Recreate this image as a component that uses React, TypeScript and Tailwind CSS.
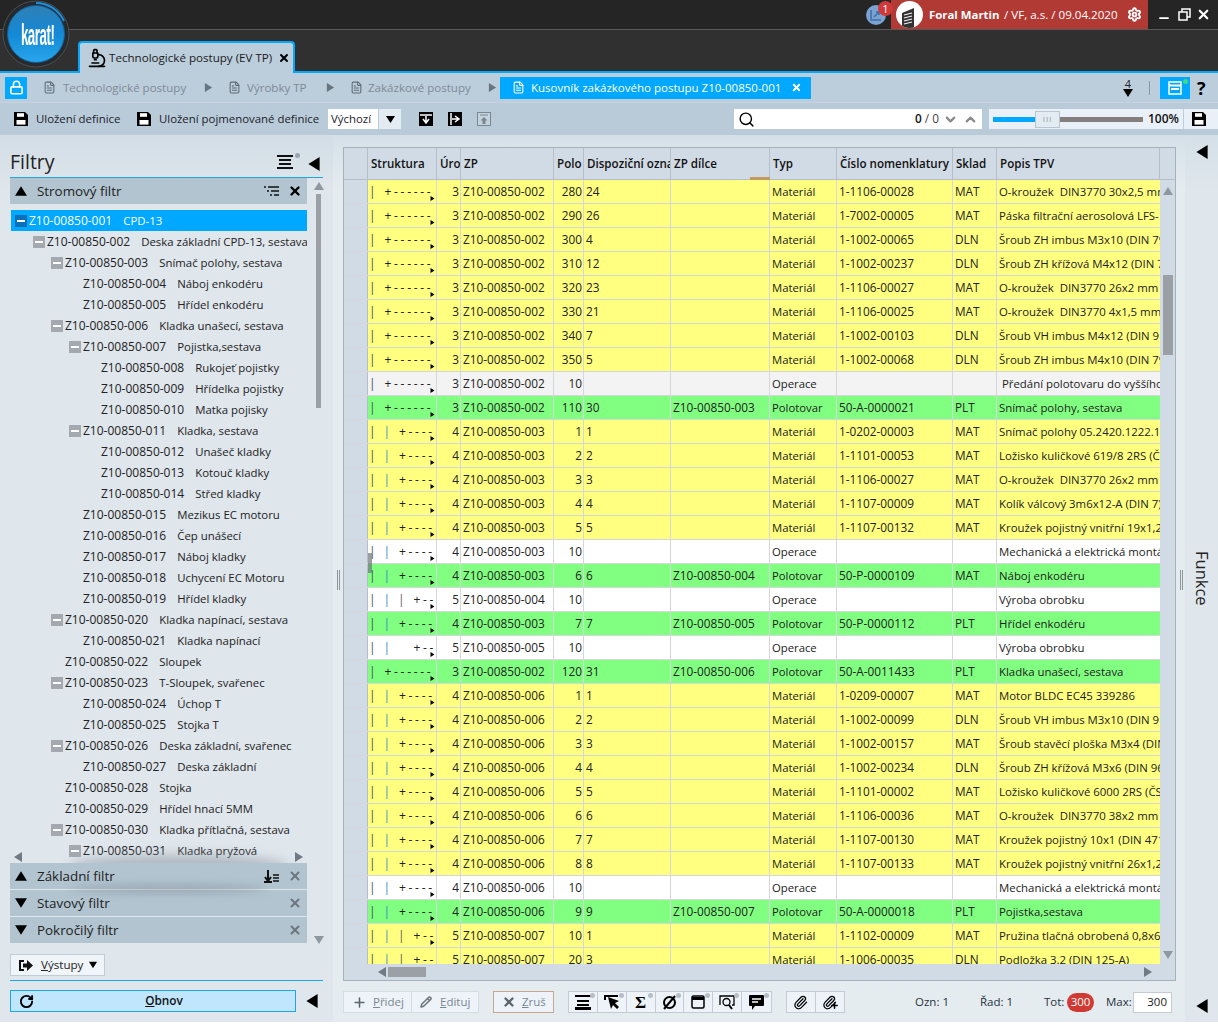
import React from 'react';
import {
  Microscope, FileText, Lock, Settings, Search, Plus, Pencil, X, RotateCw,
  Paperclip, ChevronDown, ChevronUp, Minus,
} from 'lucide-react';

type Kind = 'm' | 'o' | 'p' | 'f';
// level, zp, polo, disp, dilce, typ kind, cislo, sklad, popis
type Row = [number, string, string, string, string, Kind, string, string, string, boolean?];

const rows: Row[] = [
  [3, '002', '280', '24', '', 'm', '1-1106-00028', 'MAT', 'O-kroužek  DIN3770 30x2,5 mm'],
  [3, '002', '290', '26', '', 'm', '1-7002-00005', 'MAT', 'Páska filtrační aerosolová LFS-1'],
  [3, '002', '300', '4', '', 'm', '1-1002-00065', 'DLN', 'Šroub ZH imbus M3x10 (DIN 7984)'],
  [3, '002', '310', '12', '', 'm', '1-1002-00237', 'DLN', 'Šroub ZH křížová M4x12 (DIN 7985)'],
  [3, '002', '320', '23', '', 'm', '1-1106-00027', 'MAT', 'O-kroužek  DIN3770 26x2 mm'],
  [3, '002', '330', '21', '', 'm', '1-1106-00025', 'MAT', 'O-kroužek  DIN3770 4x1,5 mm'],
  [3, '002', '340', '7', '', 'm', '1-1002-00103', 'DLN', 'Šroub VH imbus M4x12 (DIN 912)'],
  [3, '002', '350', '5', '', 'm', '1-1002-00068', 'DLN', 'Šroub ZH imbus M4x10 (DIN 7984)'],
  [3, '002', '10', '', '', 'f', '', '', ' Předání polotovaru do vyššího celku'],
  [3, '002', '110', '30', 'Z10-00850-003', 'p', '50-A-0000021', 'PLT', 'Snímač polohy, sestava'],
  [4, '003', '1', '1', '', 'm', '1-0202-00003', 'MAT', 'Snímač polohy 05.2420.1222.1024'],
  [4, '003', '2', '2', '', 'm', '1-1101-00053', 'MAT', 'Ložisko kuličkové 619/8 2RS (ČSN)'],
  [4, '003', '3', '3', '', 'm', '1-1106-00027', 'MAT', 'O-kroužek  DIN3770 26x2 mm'],
  [4, '003', '4', '4', '', 'm', '1-1107-00009', 'MAT', 'Kolík válcový 3m6x12-A (DIN 7)'],
  [4, '003', '5', '5', '', 'm', '1-1107-00132', 'MAT', 'Kroužek pojistný vnitřní 19x1,2'],
  [4, '003', '10', '', '', 'o', '', '', 'Mechanická a elektrická montáž'],
  [4, '003', '6', '6', 'Z10-00850-004', 'p', '50-P-0000109', 'MAT', 'Náboj enkodéru'],
  [5, '004', '10', '', '', 'o', '', '', 'Výroba obrobku', true],
  [4, '003', '7', '7', 'Z10-00850-005', 'p', '50-P-0000112', 'PLT', 'Hřídel enkodéru'],
  [5, '005', '10', '', '', 'o', '', '', 'Výroba obrobku'],
  [3, '002', '120', '31', 'Z10-00850-006', 'p', '50-A-0011433', 'PLT', 'Kladka unašecí, sestava'],
  [4, '006', '1', '1', '', 'm', '1-0209-00007', 'MAT', 'Motor BLDC EC45 339286'],
  [4, '006', '2', '2', '', 'm', '1-1002-00099', 'DLN', 'Šroub VH imbus M3x10 (DIN 912)'],
  [4, '006', '3', '3', '', 'm', '1-1002-00157', 'MAT', 'Šroub stavěcí ploška M3x4 (DIN)'],
  [4, '006', '4', '4', '', 'm', '1-1002-00234', 'DLN', 'Šroub ZH křížová M3x6 (DIN 965)'],
  [4, '006', '5', '5', '', 'm', '1-1101-00002', 'MAT', 'Ložisko kuličkové 6000 2RS (ČSN)'],
  [4, '006', '6', '6', '', 'm', '1-1106-00036', 'MAT', 'O-kroužek  DIN3770 38x2 mm'],
  [4, '006', '7', '7', '', 'm', '1-1107-00130', 'MAT', 'Kroužek pojistný 10x1 (DIN 471)'],
  [4, '006', '8', '8', '', 'm', '1-1107-00133', 'MAT', 'Kroužek pojistný vnitřní 26x1,2'],
  [4, '006', '10', '', '', 'o', '', '', 'Mechanická a elektrická montáž'],
  [4, '006', '9', '9', 'Z10-00850-007', 'p', '50-A-0000018', 'PLT', 'Pojistka,sestava'],
  [5, '007', '10', '1', '', 'm', '1-1102-00009', 'MAT', 'Pružina tlačná obrobená 0,8x6x20', true],
  [5, '007', '20', '3', '', 'm', '1-1006-00035', 'DLN', 'Podložka 3.2 (DIN 125-A)', true],
];

const typ: Record<Kind, string> = { m: 'Materiál', o: 'Operace', f: 'Operace', p: 'Polotovar' };
const rowBg: Record<Kind, string> = {
  m: 'bg-[#ffff80]',
  o: 'bg-white',
  f: 'bg-[#f3f3f3]',
  p: 'bg-[#80ff80]',
};

// indent level, has box, code suffix, name
const tree: [number, boolean, string, string][] = [
  [0, true, '001', 'CPD-13'],
  [1, true, '002', 'Deska základní CPD-13, sestava'],
  [2, true, '003', 'Snímač polohy, sestava'],
  [3, false, '004', 'Náboj enkodéru'],
  [3, false, '005', 'Hřídel enkodéru'],
  [2, true, '006', 'Kladka unašecí, sestava'],
  [3, true, '007', 'Pojistka,sestava'],
  [4, false, '008', 'Rukojeť pojistky'],
  [4, false, '009', 'Hřídelka pojistky'],
  [4, false, '010', 'Matka pojisky'],
  [3, true, '011', 'Kladka, sestava'],
  [4, false, '012', 'Unašeč kladky'],
  [4, false, '013', 'Kotouč kladky'],
  [4, false, '014', 'Střed kladky'],
  [3, false, '015', 'Mezikus EC motoru'],
  [3, false, '016', 'Čep unášecí'],
  [3, false, '017', 'Náboj kladky'],
  [3, false, '018', 'Uchycení EC Motoru'],
  [3, false, '019', 'Hřídel kladky'],
  [2, true, '020', 'Kladka napínací, sestava'],
  [3, false, '021', 'Kladka napínací'],
  [2, false, '022', 'Sloupek'],
  [2, true, '023', 'T-Sloupek, svařenec'],
  [3, false, '024', 'Úchop T'],
  [3, false, '025', 'Stojka T'],
  [2, true, '026', 'Deska základní, svařenec'],
  [3, false, '027', 'Deska základní'],
  [2, false, '028', 'Stojka'],
  [2, false, '029', 'Hřídel hnací 5MM'],
  [2, true, '030', 'Kladka přítlačná, sestava'],
  [3, true, '031', 'Kladka pryžová'],
];

const Tri = ({ dir, size = 10, className = '' }: { dir: 'u' | 'd' | 'l' | 'r'; size?: number; className?: string }) => {
  const pts = { u: '5,1 10,9 0,9', d: '0,1 10,1 5,9', l: '9,0 9,10 1,5', r: '1,0 1,10 9,5' }[dir];
  return (
    <svg width={size} height={size} viewBox="0 0 10 10" className={`shrink-0 ${className}`} fill="currentColor">
      <polygon points={pts} />
    </svg>
  );
};

const Floppy = ({ className = '' }: { className?: string }) => (
  <svg width="14" height="14" viewBox="0 0 14 14" className={`shrink-0 ${className}`}>
    <path d="M0 0h11l3 3v11H0z" fill="#000" />
    <rect x="3" y="1.2" width="7" height="3.6" fill="#fff" />
    <rect x="2.5" y="8" width="9" height="4.6" fill="#fff" />
  </svg>
);

const Dot = () => <span className="absolute top-[1px] right-[2px] w-[5px] h-[5px] rounded-full bg-[#b5bec6]" />;

const IconBtn = ({ children, last }: { children: React.ReactNode; last?: boolean }) => (
  <div className={`relative w-[29px] h-full flex items-center justify-center ${last ? '' : 'border-r border-[#c3ccd4]'}`}>
    {children}
    <Dot />
  </div>
);

const FilterBar = ({ title, open, extra }: { title: string; open: boolean; extra?: React.ReactNode }) => (
  <div className="h-[26px] bg-[#b1c4d0] flex items-center pl-[5px] pr-[5px] shrink-0">
    <Tri dir={open ? 'u' : 'd'} size={12} className="text-black mr-[10px]" />
    <span className="text-[13.4px] mt-[2px] text-[#222] flex-1">{title}</span>
    {extra}
    <X size={14} strokeWidth={3.5} className="text-[#6d7780] ml-[9px]" />
  </div>
);

const Structure = ({ level, third }: { level: number; third?: boolean }) => (
  <div className="relative flex items-center h-full pl-[1px] overflow-hidden text-[12px]">
    <span className="w-[14.5px] shrink-0 text-[#40505c]">|</span>
    {level >= 4 && <span className="w-[14.5px] shrink-0 text-[#3a86c8]">|</span>}
    {level >= 5 && <span className="w-[14.5px] shrink-0 text-[#5d5d50]">{third ? '|' : ''}</span>}
    <span className="tracking-[2.7px] whitespace-pre text-[#222] ml-[1px]">
      {level === 3 ? '+------' : level === 4 ? '+----' : '+--'}
    </span>
    <Tri dir="r" size={5} className="absolute right-[1px] bottom-[2px] text-black" />
  </div>
);

const Cell = ({ children, right }: { children?: React.ReactNode; right?: boolean }) => (
  <div className={`border-r border-[#d4d8dc] h-full flex items-center overflow-hidden whitespace-pre ${right ? 'justify-end pr-[1px]' : 'pl-[2px]'}`}>
    {children}
  </div>
);

const Head = ({ children }: { children?: React.ReactNode }) => (
  <div className="border-r border-[#b4bfca] h-full flex items-center overflow-hidden whitespace-pre pl-[3px] font-semibold text-[11.6px] text-[#111]">
    {children}
  </div>
);

const App: React.FC = () => {
  return (
    <div className="relative w-[1218px] h-[1027px] overflow-hidden bg-white flex flex-col font-['Open_Sans','Noto_Sans',sans-serif] text-[11.8px] text-[#222] leading-none">
      {/* logo */}
      <div className="absolute left-[2px] top-0 w-[70px] h-[70px] z-20">
        <svg width="70" height="70" viewBox="0 0 70 70" className="absolute inset-0">
          <defs>
            <linearGradient id="lg" x1="0" y1="0" x2="0" y2="1">
              <stop offset="0" stopColor="#2f7fb5" />
              <stop offset="0.5" stopColor="#1489d6" />
              <stop offset="1" stopColor="#28a6ec" />
            </linearGradient>
          </defs>
          <circle cx="34" cy="34" r="33" fill="#262a2d" stroke="#4a4f52" strokeWidth="1" />
          <path d="M34 3a31 31 0 0 1 28 18" fill="none" stroke="#1d8fe0" strokeWidth="2" />
          <circle cx="34" cy="34" r="28.5" fill="url(#lg)" stroke="#0f5f96" strokeWidth="1" />
        </svg>
        <div className="absolute left-0 right-0 top-[23px] text-center text-white font-bold text-[29px] leading-[24px] scale-x-[0.46] font-['Liberation_Sans',sans-serif] tracking-[-1px]">
          karat!
        </div>
      </div>

      {/* title bar */}
      <div className="h-[30px] shrink-0 bg-[#252525] border-b border-[#5a5a5a] flex justify-end whitespace-pre">
        <div className="relative w-[24px] mr-[4px] flex items-center justify-center">
          <div className="w-[20px] h-[20px] rounded-full bg-[#7ba3d0] mt-[1px] flex items-center justify-center">
            <svg width="12" height="12" viewBox="0 0 12 12" fill="none" stroke="#3f6ea8" strokeWidth="1.5">
              <path d="M1 1v10h10M4 8l5-5M6 3h3v3" />
            </svg>
          </div>
          <div className="absolute top-[1px] right-[-5px] w-[15px] h-[15px] rounded-full bg-[#d0383a] text-white text-[11px] flex items-center justify-center">1</div>
        </div>
        <div className="w-[257px] ml-[-1px] bg-[#b23a34] flex items-center text-white">
          <div className="ml-[5px] w-[27px] h-[27px] shrink-0 rounded-full bg-white flex items-end justify-center overflow-hidden">
            <svg width="18" height="22" viewBox="0 0 18 22">
              <path d="M1 7l12-5v20H1z" fill="#333" />
              <path d="M3 9l8-2M3 12l8-2M3 15l8-2M3 18l8-2" stroke="#fff" strokeWidth="1" />
            </svg>
          </div>
          <span className="ml-[6px] w-[70px] font-bold text-[11.4px]">Foral Martin</span>
          <span className="ml-[5px] w-[114px] text-[11.6px]">/ VF, a.s. / 09.04.2020</span>
          <Settings size={15} strokeWidth={3} className="ml-[9px] shrink-0" />
        </div>
        <div className="w-[70px] flex items-center text-white pl-[9px]">
          <Minus size={14} strokeWidth={3} className="mt-[6px] shrink-0" />
          <svg width="13" height="13" viewBox="0 0 13 13" className="ml-[7px] shrink-0" fill="none" stroke="#fff" strokeWidth="1.5">
            <rect x="1" y="4" width="8" height="8" />
            <path d="M4 4V1h8v8H9" />
          </svg>
          <X size={15} strokeWidth={3.5} className="ml-[5px] shrink-0" />
        </div>
      </div>

      {/* tab strip */}
      <div className="h-[43px] shrink-0 bg-[#2f302f] border-b-2 border-[#00a8ff] flex items-end pl-[78px]">
        <div className="w-[217px] h-[32px] mb-[-2px] bg-[#bccddb] border-t-2 border-x-2 border-[#00a8ff] rounded-t-[4px] flex items-center pl-[7px] text-[11.6px] text-[#1b1b1b] whitespace-pre">
          <Microscope size={20} strokeWidth={2} className="text-black mr-[2px] shrink-0" />
          Technologické postupy (EV TP)
          <X size={12} strokeWidth={4} className="ml-[6px] text-black shrink-0" />
        </div>
      </div>

      {/* breadcrumb */}
      <div className="h-[30px] shrink-0 bg-[#bccddb] border-b border-[#c7d4df] flex items-center pl-[5px] text-[11.55px] text-[#7d8b97] whitespace-pre">
        <div className="w-[22px] h-[22px] shrink-0 bg-[#00a8ff] flex items-center justify-center">
          <Lock size={15} strokeWidth={2.5} className="text-white" />
        </div>
        <FileText size={13} className="ml-[16px] text-[#5f6d79] shrink-0" />
        <span className="ml-[7px] w-[123px]">Technologické postupy</span>
        <Tri dir="r" size={9} className="ml-[18px] text-[#68757f]" />
        <FileText size={13} className="ml-[15px] text-[#5f6d79] shrink-0" />
        <span className="ml-[6px] w-[60px]">Výrobky TP</span>
        <Tri dir="r" size={9} className="ml-[19px] text-[#68757f]" />
        <FileText size={13} className="ml-[15px] text-[#5f6d79] shrink-0" />
        <span className="ml-[5px] w-[103px]">Zakázkové postupy</span>
        <Tri dir="r" size={9} className="ml-[17px] text-[#68757f]" />
        <div className="ml-[3px] w-[311px] shrink-0 h-[22px] bg-[#00a8ff] text-white flex items-center pl-[12px] text-[11.5px]">
          <FileText size={13} className="mr-[6px] shrink-0" />
          <span className="w-[250px]">Kusovník zakázkového postupu Z10-00850-001</span>
          <X size={11} strokeWidth={4} className="ml-[10px] shrink-0" />
        </div>
        <div className="ml-[310px] w-[14px] shrink-0 flex flex-col items-center text-[#222]">
          <span className="text-[11px] underline">4</span>
          <Tri dir="d" size={10} className="text-black mt-[-1px]" />
        </div>
        <div className="ml-[14px] w-px h-[14px] shrink-0 bg-[#8a97a2]" />
        <div className="relative ml-[10px] w-[30px] h-[22px] shrink-0 bg-[#00a8ff] flex items-center justify-center">
          <svg width="14" height="14" viewBox="0 0 14 14" fill="none" stroke="#fff" strokeWidth="1.5">
            <rect x="1" y="1" width="12" height="12" />
            <path d="M1 4.5h12M3 8h8" strokeWidth="2" />
          </svg>
          <span className="absolute top-[2px] right-[2px] w-[5px] h-[5px] rounded-full bg-[#3ddc84]" />
        </div>
        <span className="ml-[7px] text-[18px] font-bold text-black">?</span>
      </div>

      {/* toolbar */}
      <div className="h-[32px] shrink-0 bg-[#b9cbd9] flex items-center pl-[14px] text-[11.4px] text-[#1b1b2b] whitespace-pre">
        <Floppy />
        <span className="ml-[8px] w-[87px]">Uložení definice</span>
        <Floppy className="ml-[14px]" />
        <span className="ml-[8px] w-[160px]">Uložení pojmenované definice</span>
        <div className="ml-[9px] w-[50px] h-[20px] bg-white flex items-center pl-[3px]">Výchozí</div>
        <div className="ml-px w-[22px] h-[20px] bg-[#e4ecf3] flex items-center justify-center">
          <Tri dir="d" size={9} className="text-black" />
        </div>
        <svg width="14" height="14" viewBox="0 0 14 14" className="ml-[18px] shrink-0">
          <rect width="14" height="14" fill="#000" />
          <path d="M1 3h12M7 4v7M4 7l3 4 3-4" stroke="#fff" strokeWidth="1.5" fill="none" />
        </svg>
        <svg width="14" height="14" viewBox="0 0 14 14" className="ml-[15px] shrink-0">
          <rect width="14" height="14" fill="#000" />
          <path d="M3 1v12M4 7h7M7 4l4 3-4 3" stroke="#fff" strokeWidth="1.5" fill="none" />
        </svg>
        <svg width="14" height="14" viewBox="0 0 14 14" className="ml-[15px] shrink-0">
          <rect x="0.5" y="0.5" width="13" height="13" fill="#c5d3de" stroke="#7a8791" />
          <path d="M3 3h8" stroke="#7a8791" />
          <path d="M7 5l3.5 3.5H8.5V12h-3V8.500H3.500z" fill="#7a8791" />
        </svg>
        <div className="ml-[243px] w-[248px] h-[20px] shrink-0 bg-white flex items-center pl-[4px] pr-[4px] text-[#111] text-[11.8px]">
          <Search size={17} strokeWidth={2} className="text-black shrink-0" />
          <span className="ml-auto font-semibold">0</span>
          <span className="ml-[3px] text-[#444]">/ 0</span>
          <ChevronDown size={15} strokeWidth={3.5} className="ml-[4px] text-[#8a8a8a] shrink-0" />
          <ChevronUp size={15} strokeWidth={3.5} className="ml-[5px] text-[#8a8a8a] shrink-0" />
        </div>
        <div className="ml-[7px] w-[229px] h-[20px] shrink-0 bg-[#e9f0f7] flex items-center pl-[4px]">
          <div className="w-[42px] h-[5px] bg-[#00a8ff]" />
          <div className="w-[25px] h-[17px] bg-[#e4ecf3] border border-[#b8c4ce] flex items-center justify-center text-[8px] text-[#8a96a0] tracking-[1px]">III</div>
          <div className="w-[83px] h-[5px] bg-[#847e7e]" />
          <span className="ml-[5px] w-[35px] font-semibold text-[#111] text-[12px]">100%</span>
          <div className="w-px h-full bg-[#bccddb]" />
          <Floppy className="ml-[8px]" />
        </div>
      </div>

      {/* main */}
      <div className="h-[887px] shrink-0 flex">
        {/* filter panel */}
        <div className="w-[333px] shrink-0 bg-[#dfe6ec] bg-linear-to-b from-[#d2dde5] to-[#dfe6ec] to-[6%] flex flex-col pl-[10px]">
          <div className="w-[313px] h-[43px] shrink-0 border-b border-[#1ea5ea] flex items-end pb-[2px]">
            <span className="text-[19.5px] leading-[26px] text-[#222] flex-1">Filtry</span>
            <div className="relative w-[24px] h-[18px] mb-[4px] mr-[6px]">
              <svg width="16" height="14" viewBox="0 0 16 14" className="absolute left-0 top-[2px]">
                <path d="M0 1h16M2 5h12M2 9h12M0 13h16" stroke="#111" strokeWidth="2" />
              </svg>
              <span className="absolute right-[1px] top-0 w-[5px] h-[5px] rounded-full bg-[#9aa4ad]" />
            </div>
            <Tri dir="l" size={14} className="text-black mb-[4px] mr-[2px]" />
          </div>
          <div className="h-[765px] shrink-0 flex">
            <div className="w-[297px] shrink-0 flex flex-col">
              <div className="h-[26px] bg-[#b1c4d0] flex items-center pl-[5px] pr-[5px] shrink-0">
                <Tri dir="u" size={12} className="text-black mr-[10px]" />
                <span className="text-[13.4px] mt-[2px] text-[#222] flex-1">Stromový filtr</span>
                <svg width="15" height="10" viewBox="0 0 15 10">
                  <path d="M0 1h2M4 1h11M3 5h2M7 5h8M6 9h2M10 9h5" stroke="#111" strokeWidth="1.6" />
                </svg>
                <X size={14} strokeWidth={4} className="text-black ml-[9px]" />
              </div>
              <div className="relative h-[659px] shrink-0 pt-[6px] overflow-hidden">
                {tree.map(([lvl, box, code, name], i) => (
                  <div
                    key={code}
                    className={`h-[21px] flex items-center whitespace-pre text-[12px] ${i === 0 ? 'ml-px bg-[#00a8ff] text-white' : 'text-[#222]'}`}
                    style={{ paddingLeft: (i === 0 ? 4 : 5) + lvl * 18 }}
                  >
                    <span className={`w-[12px] h-[12px] mr-[2px] flex items-center justify-center shrink-0 ${box ? (i === 0 ? 'bg-[#0b70b8]' : 'bg-[#a3a9ae]') : ''}`}>
                      {box && <span className="w-[8px] h-[2px] bg-white" />}
                    </span>
                    <span>{`Z10-00850-${code}`}</span>
                    <span className="ml-[11px] text-[11.4px]">{name}</span>
                  </div>
                ))}
                <div className="absolute left-[60px] right-[20px] bottom-[-14px] h-[22px] rounded-[50%] bg-[#8f98a3] blur-[6px] opacity-60" />
                <Tri dir="l" size={10} className="absolute left-[3px] bottom-[1px] text-[#6f7a84]" />
                <Tri dir="r" size={10} className="absolute right-[3px] bottom-[1px] text-[#6f7a84]" />
              </div>
              <div className="relative">
                <div className="absolute left-[60px] right-[40px] top-[22px] h-[8px] rounded-[50%] bg-[#7f8791] blur-[4px] opacity-50" />
                <FilterBar
                  title="Základní filtr"
                  open
                  extra={
                    <svg width="15" height="13" viewBox="0 0 15 13">
                      <path d="M4 0v10M1 7l3 4 3-4M0 12h8" stroke="#111" strokeWidth="2" fill="none" />
                      <path d="M9 5h6M9 8h6M9 11h6" stroke="#111" strokeWidth="1.6" />
                    </svg>
                  }
                />
              </div>
              <div className="h-px shrink-0" />
              <FilterBar title="Stavový filtr" open={false} />
              <div className="h-px shrink-0" />
              <FilterBar title="Pokročilý filtr" open={false} />
            </div>
            <div className="w-[16px] ml-px flex flex-col items-center pl-[5px]">
              <Tri dir="u" size={10} className="text-[#8f989f] mt-[3px]" />
              <div className="w-[5px] h-[214px] mt-[3px] bg-[#9aa0a6]" />
              <Tri dir="d" size={10} className="text-[#8f989f] mt-auto mb-[-2px]" />
            </div>
          </div>
          <div className="w-[313px] h-[38px] shrink-0 border-b border-[#1ea5ea] pt-[11px]">
            <div className="w-[95px] h-[22px] bg-[#f0f5fa] border border-[#c3ccd4] flex items-center pl-[8px] text-[11.6px] text-[#222]">
              <svg width="14" height="11" viewBox="0 0 14 11" fill="#111" className="mr-[8px] shrink-0">
                <path d="M0 0h5v2H2v7h3v2H0z" />
                <path d="M4 3.500h4V0l6 5.500-6 5.500V7.500H4z" />
              </svg>
              <span><u>V</u>ýstupy</span>
              <Tri dir="d" size={8} className="ml-[6px] text-black" />
            </div>
          </div>
          <div className="flex items-center mt-[9px]">
            <div className="relative w-[286px] h-[22px] bg-[#bfe6fd] border border-[#1ea5ea] flex items-center justify-center pl-[22px] font-semibold text-[11.8px] text-[#111]">
              <RotateCw size={15} strokeWidth={3} className="absolute left-[8px] text-black" />
              <span><u>O</u>bnov</span>
            </div>
            <Tri dir="l" size={14} className="ml-[9px] text-black" />
          </div>
        </div>

        {/* center */}
        <div className="w-[852px] shrink-0 bg-[#e5ecf0] bg-linear-to-b from-[#d4e0e8] to-[#e5ecf0] to-[6%] flex flex-col relative">
          <div className="absolute left-[4px] top-[435px] w-[3px] h-[20px] border-x border-[#8e979e]" />
          <div className="absolute right-[2px] top-[435px] w-[3px] h-[20px] border-x border-[#8e979e]" />
          <div className="ml-[10px] mt-[12px] w-[833px] h-[834px] shrink-0 border border-[#a7b1ba] bg-[#d1dbe6] flex flex-col">
            {/* header */}
            <div className="relative grid grid-cols-[24px_69px_24px_93px_30px_87px_99px_67px_116px_44px_163px] h-[32px] shrink-0 border-b border-[#b4bfca]">
              <Head />
              <Head>Struktura</Head>
              <Head>Úro</Head>
              <Head>ZP</Head>
              <Head>Polo</Head>
              <Head>Dispoziční označení</Head>
              <Head>ZP dílce</Head>
              <Head>Typ</Head>
              <Head>Číslo nomenklatury</Head>
              <Head>Sklad</Head>
              <Head>Popis TPV</Head>
              <div className="absolute left-[406px] bottom-[-1px] w-[20px] h-[3px] bg-[#c09a5e]" />
            </div>
            {/* body */}
            <div className="flex h-[784px] shrink-0 overflow-hidden">
              <div className="relative w-[816px] shrink-0">
                {rows.map((r, i) => (
                  <div key={i} className={`grid grid-cols-[24px_69px_24px_93px_30px_87px_99px_67px_116px_44px_163px] h-[24px] border-b border-[#d4d8dc] ${rowBg[r[5]]}`}>
                    <div className="bg-[#d1dbe6] border-r border-[#b4bfca] h-full" />
                    <div className="border-r border-[#d4d8dc] h-full">
                      <Structure level={r[0]} third={r[9]} />
                    </div>
                    <Cell right>{r[0]}</Cell>
                    <Cell>{`Z10-00850-${r[1]}`}</Cell>
                    <Cell right>{r[2]}</Cell>
                    <Cell>{r[3]}</Cell>
                    <Cell>{r[4]}</Cell>
                    <Cell><span className="text-[11.3px]">{typ[r[5]]}</span></Cell>
                    <Cell>{r[6]}</Cell>
                    <Cell>{r[7]}</Cell>
                    <div className="h-full flex items-center overflow-hidden whitespace-pre pl-[2px] text-[11.4px]">{r[8]}</div>
                  </div>
                ))}
                <div className="absolute left-[24px] top-[373px] w-[4px] h-[20px] bg-[#6d757a] opacity-70" />
              </div>
              <div className="flex-1 flex flex-col items-center">
                <Tri dir="u" size={10} className="text-[#8f989f] mt-[6px]" />
                <div className="w-[10px] h-[80px] mt-[79px] bg-[#9aa0a6]" />
                <Tri dir="d" size={10} className="text-[#8f989f] mt-auto mb-[4px]" />
              </div>
            </div>
            {/* horizontal scrollbar */}
            <div className="flex-1 flex items-center pl-[33px] pr-[22px]">
              <Tri dir="l" size={10} className="text-[#6f7a84]" />
              <div className="ml-[1px] w-[38px] h-[10px] bg-[#9aa0a6]" />
              <Tri dir="r" size={10} className="ml-auto text-[#6f7a84]" />
            </div>
          </div>

          {/* bottom toolbar */}
          <div className="mt-[10px] ml-[10px] h-[22px] flex items-center text-[11.5px] whitespace-pre">
            <div className="w-[136px] h-full bg-[#edf3f8] border border-[#d4dde4] flex items-center text-[#7b8892]">
              <div className="w-[68px] h-full border-r border-[#d4dde4] flex items-center pl-[8px]">
                <Plus size={15} strokeWidth={2.5} className="text-[#5e666d] mr-[6px]" />
                <span><u>P</u>řidej</span>
              </div>
              <div className="flex items-center pl-[8px]">
                <Pencil size={12} strokeWidth={3} className="text-[#6d757c] mr-[8px]" />
                <span><u>E</u>dituj</span>
              </div>
            </div>
            <div className="ml-[14px] w-[61px] h-full bg-[#edf3f8] border border-[#c9a78e] flex items-center pl-[8px] text-[#7b8892]">
              <X size={14} strokeWidth={4} className="text-[#5e666d] mr-[6px]" />
              <span><u>Z</u>ruš</span>
            </div>
            <div className="ml-[14px] w-[204px] h-full bg-[#edf3f8] border border-[#c3ccd4] flex items-center text-black">
              <IconBtn>
                <svg width="16" height="15" viewBox="0 0 16 15"><path d="M0 1h16M2 6h12M2 10h12" stroke="#000" strokeWidth="2" /><rect y="12" width="16" height="3" /></svg>
              </IconBtn>
              <IconBtn>
                <svg width="16" height="15" viewBox="0 0 16 15"><path d="M0 0h14v2H2v3H0z" /><path d="M4 2l3 12 2-4 4 4 2-2-4-4 4-2z" /></svg>
              </IconBtn>
              <IconBtn><span className="text-[17px] font-bold font-['Liberation_Serif',serif]">Σ</span></IconBtn>
              <IconBtn>
                <svg width="15" height="15" viewBox="0 0 15 15" fill="none" stroke="#000" strokeWidth="2"><circle cx="7.500" cy="7.500" r="5.500" /><path d="M2 14L13 1" /></svg>
              </IconBtn>
              <IconBtn>
                <svg width="14" height="14" viewBox="0 0 14 14" fill="none" stroke="#000" strokeWidth="1.5"><rect x="1" y="1" width="12" height="12" rx="1.500" /><path d="M1 3.500h12" strokeWidth="3" /></svg>
              </IconBtn>
              <IconBtn>
                <svg width="16" height="15" viewBox="0 0 16 15" fill="none" stroke="#000" strokeWidth="1.300"><path d="M1 10V1h14v9h-2" /><circle cx="7.500" cy="7" r="3.500" /><path d="M10 10l3 4" strokeWidth="2" /></svg>
              </IconBtn>
              <IconBtn last>
                <svg width="15" height="15" viewBox="0 0 15 15"><path d="M1 0h13a1 1 0 0 1 1 1v9a1 1 0 0 1-1 1H6l-3 4v-4H1a1 1 0 0 1-1-1V1a1 1 0 0 1 1-1z" /><path d="M3 4h9M3 7h6" stroke="#fff" strokeWidth="1.300" /></svg>
              </IconBtn>
            </div>
            <div className="ml-[14px] w-[59px] h-full bg-[#edf3f8] border border-[#c3ccd4] flex items-center">
              <div className="w-[29px] h-full border-r border-[#c3ccd4] flex items-center justify-center">
                <Paperclip size={15} strokeWidth={2} className="text-black" />
              </div>
              <div className="relative w-[29px] h-full flex items-center justify-center">
                <Paperclip size={15} strokeWidth={2} className="text-black" />
                <Plus size={9} strokeWidth={4} className="absolute right-[5px] bottom-[2px] text-black" />
              </div>
            </div>
            <span className="ml-[70px] w-[65px] text-[#26323c]">Ozn: 1</span>
            <span className="w-[64px] text-[#26323c]">Řad: 1</span>
            <span className="w-[23px] text-[#26323c]">Tot:</span>
            <span className="w-[27px] h-[19px] rounded-full bg-[#cf3a32] text-white flex items-center justify-center">300</span>
            <span className="ml-[12px] w-[27px] text-[#26323c]">Max:</span>
            <div className="w-[39px] h-[21px] bg-white border border-[#c3ccd4] flex items-center justify-end pr-[4px]">300</div>
          </div>
        </div>

        {/* right rail */}
        <div className="flex-1 bg-[#dfe6ec] bg-linear-to-b from-[#d4e0e8] to-[#dfe6ec] to-[6%] flex flex-col items-center pt-[10px]">
          <Tri dir="l" size={14} className="text-black" />
          <div className="mt-[392px] [writing-mode:vertical-rl] text-[16.5px] text-[#222]">Funkce</div>
          <Tri dir="l" size={14} className="mt-auto mb-[9px] text-black" />
        </div>
      </div>
    </div>
  );
};

export default App;
